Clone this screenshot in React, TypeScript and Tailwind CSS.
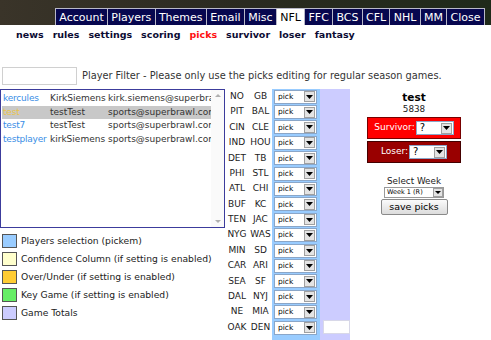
import React from 'react';

const tabs = ['Account', 'Players', 'Themes', 'Email', 'Misc', 'NFL', 'FFC', 'BCS', 'CFL', 'NHL', 'MM', 'Close'];
const links = ['news', 'rules', 'settings', 'scoring', 'picks', 'survivor', 'loser', 'fantasy'];

const players = [
  { user: 'kercules', name: 'KirkSiemens', email: 'kirk.siemens@superbrawl.com' },
  { user: 'test', name: 'testTest', email: 'sports@superbrawl.com', selected: true },
  { user: 'test7', name: 'testTest', email: 'sports@superbrawl.com' },
  { user: 'testplayer', name: 'kirkSiemens', email: 'sports@superbrawl.com' },
];

const games = [
  ['NO', 'GB'], ['PIT', 'BAL'], ['CIN', 'CLE'], ['IND', 'HOU'], ['DET', 'TB'], ['PHI', 'STL'],
  ['ATL', 'CHI'], ['BUF', 'KC'], ['TEN', 'JAC'], ['NYG', 'WAS'], ['MIN', 'SD'], ['CAR', 'ARI'],
  ['SEA', 'SF'], ['DAL', 'NYJ'], ['NE', 'MIA'], ['OAK', 'DEN'],
];

const legend = [
  { color: 'bg-[#99ccff]', label: 'Players selection (pickem)' },
  { color: 'bg-[#ffffcc]', label: 'Confidence Column (if setting is enabled)' },
  { color: 'bg-[#ffcc33]', label: 'Over/Under (if setting is enabled)' },
  { color: 'bg-[#66ee66]', label: 'Key Game (if setting is enabled)' },
  { color: 'bg-[#ccccff]', label: 'Game Totals' },
];

function Arrow() {
  return (
    <div className="w-[11px] h-[11px] bg-[#e4e4e4] border border-[#a0a0a0] flex items-center justify-center">
      <svg width="7" height="4" viewBox="0 0 7 4"><path d="M0 0h7L3.5 4z" fill="#000" /></svg>
    </div>
  );
}

function FakeSelect({ value, w, text }: { value: string; w: string; text: string }) {
  return (
    <div className={`${w} h-[14px] bg-white border border-[#8aa6c8] flex items-center justify-between pl-[3px] pr-[1px]`}>
      <span className={`${text} leading-none text-black`}>{value}</span>
      <Arrow />
    </div>
  );
}

export default function App() {
  return (
    <div className="w-[491px] h-[340px] overflow-hidden bg-white text-[#333] font-['DejaVu_Sans',Verdana,sans-serif]">
      <div className="h-[25px] bg-gradient-to-r from-[#3a3429] via-[#2a2a20] to-[#1f2a1a] flex items-end pl-[55px]">
        {tabs.map(t => (
          <div
            key={t}
            className={`h-[17px] px-[3.3px] border border-b-0 border-[#b8b8c8] -ml-px first:ml-0 flex items-center text-[11px] leading-none ${t === 'NFL' ? 'bg-white text-black' : 'bg-[#07074f] text-white'}`}
          >
            {t}
          </div>
        ))}
      </div>

      <div className="flex gap-[9px] pl-[16px] mt-[4px] text-[9.5px] font-bold leading-[12px] text-[#0b0b33]">
        {links.map(l => (
          <span key={l} className={l === 'picks' ? 'text-[#ff1010]' : ''}>{l}</span>
        ))}
      </div>

      <div className="flex items-center mt-[26px] pl-[2px] h-[18px]">
        <div className="w-[75px] h-[18px] border border-[#d0d0d0] bg-white" />
        <span className="ml-[5px] text-[9.8px] text-[#333] whitespace-nowrap">
          Player Filter - Please only use the picks editing for regular season games.
        </span>
      </div>

      <div className="flex mt-[4px] h-[251px]">
        <div className="w-[225px] flex flex-col">
          <div className="h-[139px] border border-[#3c3c9c] flex">
            <div className="flex-1 overflow-hidden pt-[2px] pl-[1px] text-[9px]">
              {players.map(p => (
                <div key={p.user} className={`h-[13.5px] flex items-center whitespace-nowrap ${p.selected ? 'bg-[#c8c8c8]' : ''}`}>
                  <span className={`w-[48px] shrink-0 pl-[1px] tracking-[-0.2px] ${p.selected ? 'text-[#e8c44a]' : 'text-[#3a8ee6]'}`}>{p.user}</span>
                  <span className="w-[58px] shrink-0 text-[#333]">{p.name}</span>
                  <span className="text-[#333]">{p.email}</span>
                </div>
              ))}
            </div>
            <div className="w-[13px] bg-[#fafafa] flex flex-col items-center justify-between py-[4px]">
              <svg width="6" height="3" viewBox="0 0 6 3"><path d="M0 3h6L3 0z" fill="#b0b0b0" /></svg>
              <svg width="6" height="3" viewBox="0 0 6 3"><path d="M0 0h6L3 3z" fill="#b0b0b0" /></svg>
            </div>
          </div>
          <div className="mt-[6px] flex flex-col gap-[4px] pl-[2px]">
            {legend.map(l => (
              <div key={l.label} className="flex items-center h-[14px]">
                <div className={`w-[15px] h-[14px] border border-[#555] shrink-0 ${l.color}`} />
                <span className="ml-[4px] text-[9.2px] text-[#222] whitespace-nowrap">{l.label}</span>
              </div>
            ))}
          </div>
        </div>

        <div className="w-[47px] flex flex-col text-[9px] text-[#222]">
          {games.map(([a, h]) => (
            <div key={a} className="h-[15.4px] flex items-center">
              <span className="w-[24px] text-center">{a}</span>
              <span className="w-[23px] text-center">{h}</span>
            </div>
          ))}
        </div>

        <div className="w-[48px] bg-[#99ccff] flex flex-col">
          {games.map(([a]) => (
            <div key={a} className="h-[15.4px] flex items-center pl-[2px]">
              <FakeSelect value="pick" w="w-[43px]" text="text-[7.5px]" />
            </div>
          ))}
        </div>

        <div className="w-[30px] bg-[#ccccff] flex flex-col justify-end pb-[6px] items-end">
          <div className="w-[27px] h-[14px] bg-white border border-[#d8d8e8]" />
        </div>

        <div className="w-[128px] flex flex-col items-center pt-[2px]">
          <div className="text-[10.5px] font-bold text-black leading-[13px]">test</div>
          <div className="text-[8.8px] text-[#222] leading-[11px]">5838</div>
          <div className="mt-[2px] w-[94px] h-[22px] bg-[#ff0000] border border-[#700] flex items-center justify-center gap-[1px]">
            <span className="text-[9px] text-white">Survivor:</span>
            <FakeSelect value="?" w="w-[38px]" text="text-[10px]" />
          </div>
          <div className="mt-[2px] w-[94px] h-[22px] bg-[#990000] border border-[#400] flex items-center justify-center gap-[1px]">
            <span className="text-[9px] text-white">Loser:</span>
            <FakeSelect value="?" w="w-[38px]" text="text-[10px]" />
          </div>
          <div className="mt-[13px] text-[8.8px] text-[#222] leading-[11px]">Select Week</div>
          <div className="w-[60px] h-[11px] bg-white border border-[#999] flex items-center justify-between pl-[2px]">
            <span className="text-[6.5px] leading-none text-black">Week 1 (R)</span>
            <div className="w-[10px] h-[9px] bg-[#e4e4e4] border border-[#a0a0a0] flex items-center justify-center">
              <svg width="6" height="3" viewBox="0 0 6 3"><path d="M0 0h6L3 3z" fill="#000" /></svg>
            </div>
          </div>
          <button className="mt-[1px] w-[67px] h-[16px] bg-gradient-to-b from-[#fbfbfb] to-[#dcdcdc] border border-[#8a8a8a] rounded-[2px] text-[9.5px] leading-none text-black">
            save picks
          </button>
        </div>
      </div>
    </div>
  );
}
